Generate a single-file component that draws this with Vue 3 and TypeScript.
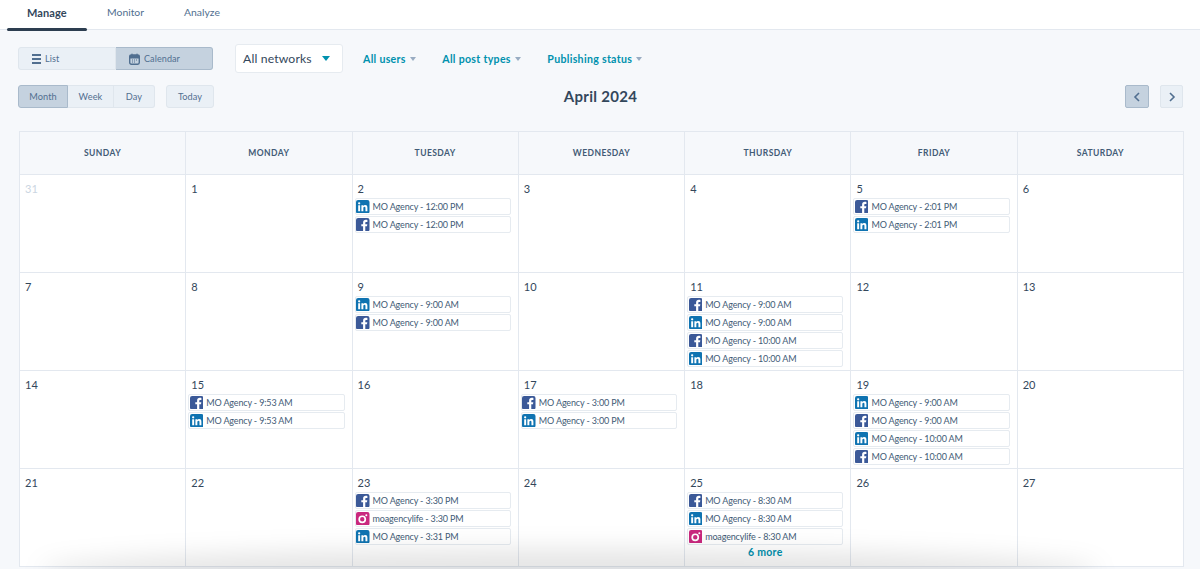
<script setup lang="ts">
type Net = "in" | "fb" | "ig";
interface Post {
  net: Net;
  text: string;
}
interface Day {
  n: number;
  muted?: boolean;
  posts?: Post[];
  more?: string;
}

const mo = (net: Net, time: string): Post => ({ net, text: `MO Agency - ${time}` });
const ig = (time: string): Post => ({ net: "ig", text: `moagencylife - ${time}` });

const weekdays = ["SUNDAY", "MONDAY", "TUESDAY", "WEDNESDAY", "THURSDAY", "FRIDAY", "SATURDAY"];

const days: Day[] = [
  { n: 31, muted: true },
  { n: 1 },
  { n: 2, posts: [mo("in", "12:00 PM"), mo("fb", "12:00 PM")] },
  { n: 3 },
  { n: 4 },
  { n: 5, posts: [mo("fb", "2:01 PM"), mo("in", "2:01 PM")] },
  { n: 6 },
  { n: 7 },
  { n: 8 },
  { n: 9, posts: [mo("in", "9:00 AM"), mo("fb", "9:00 AM")] },
  { n: 10 },
  { n: 11, posts: [mo("fb", "9:00 AM"), mo("in", "9:00 AM"), mo("fb", "10:00 AM"), mo("in", "10:00 AM")] },
  { n: 12 },
  { n: 13 },
  { n: 14 },
  { n: 15, posts: [mo("fb", "9:53 AM"), mo("in", "9:53 AM")] },
  { n: 16 },
  { n: 17, posts: [mo("fb", "3:00 PM"), mo("in", "3:00 PM")] },
  { n: 18 },
  { n: 19, posts: [mo("in", "9:00 AM"), mo("fb", "9:00 AM"), mo("in", "10:00 AM"), mo("fb", "10:00 AM")] },
  { n: 20 },
  { n: 21 },
  { n: 22 },
  { n: 23, posts: [mo("fb", "3:30 PM"), ig("3:30 PM"), mo("in", "3:31 PM")] },
  { n: 24 },
  { n: 25, posts: [mo("fb", "8:30 AM"), mo("in", "8:30 AM"), ig("8:30 AM")], more: "6 more" },
  { n: 26 },
  { n: 27 },
];
</script>

<template>
  <div class="page">
    <nav class="tabs">
      <a class="tab tab--active">Manage</a>
      <a class="tab">Monitor</a>
      <a class="tab">Analyze</a>
    </nav>

    <div class="filters">
      <div class="seg seg--view">
        <button class="seg-btn">
          <svg width="9" height="10" viewBox="0 0 9 10"><path d="M0 1h9M0 5h9M0 9h9" stroke="#516f90" stroke-width="2" fill="none" /></svg>
          List
        </button>
        <button class="seg-btn seg-btn--on">
          <svg width="11" height="12" viewBox="0 0 11 12">
            <rect x="0.7" y="2" width="9.6" height="9.2" rx="1.6" fill="none" stroke="#516f90" stroke-width="1.4" />
            <path d="M1 2.5h9V5H1zM3 .6v2.4M8 .6v2.4" fill="#516f90" stroke="#516f90" />
            <path d="M3 7h1M5 7h1M7 7h1M3 9h1M5 9h1" stroke="#516f90" />
          </svg>
          Calendar
        </button>
      </div>
      <div class="select">
        <span>All networks</span>
        <i class="caret caret--teal"></i>
      </div>
      <a class="filter">All users<i class="caret"></i></a>
      <a class="filter">All post types<i class="caret"></i></a>
      <a class="filter">Publishing status<i class="caret"></i></a>
    </div>

    <div class="range">
      <div class="range-left">
        <div class="seg">
          <button class="seg-btn seg-btn--on seg-month">Month</button>
          <button class="seg-btn seg-week">Week</button>
          <button class="seg-btn seg-day">Day</button>
        </div>
        <button class="today">Today</button>
      </div>
      <h1 class="title">April 2024</h1>
      <div class="range-right">
        <button class="arrow arrow--on">
          <svg width="8" height="12" viewBox="0 0 8 12"><path d="M6 2 2 6l4 4" fill="none" stroke="#516f90" stroke-width="1.6" /></svg>
        </button>
        <button class="arrow">
          <svg width="8" height="12" viewBox="0 0 8 12"><path d="m2 2 4 4-4 4" fill="none" stroke="#516f90" stroke-width="1.6" /></svg>
        </button>
      </div>
    </div>

    <div class="calendar">
      <div v-for="w in weekdays" :key="w" class="head">{{ w }}</div>
      <div v-for="d in days" :key="d.n" class="cell">
        <div class="num" :class="{ 'num--muted': d.muted }">{{ d.n }}</div>
        <div v-for="(p, i) in d.posts" :key="i" class="post">
          <svg v-if="p.net === 'in'" class="ico" viewBox="0 0 16 16">
            <rect width="16" height="16" rx="2.5" fill="#0f73b1" />
            <path d="M2.6 6.2h2.3v7.2H2.6zM3.75 2.6a1.35 1.35 0 1 1 0 2.7 1.35 1.35 0 0 1 0-2.7zM6.4 6.2h2.2v1c.4-.7 1.2-1.2 2.3-1.2 2.2 0 2.6 1.4 2.6 3.3v4.1h-2.3V9.8c0-.9 0-1.8-1.1-1.8s-1.4.9-1.4 1.8v3.6H6.4z" fill="#fff" />
          </svg>
          <svg v-else-if="p.net === 'fb'" class="ico" viewBox="0 0 16 16">
            <rect width="16" height="16" rx="2.5" fill="#3b5998" />
            <path d="M11 16V9.8h2l.4-2.5H11V5.8c0-.8.3-1.2 1.2-1.2h1.3V2.3c-.4 0-1.1-.1-1.9-.1-1.9 0-3.2 1.2-3.2 3.3v1.8H6.3v2.5h2.1V16z" fill="#fff" />
          </svg>
          <svg v-else class="ico" viewBox="0 0 16 16">
            <rect width="16" height="16" rx="2.5" fill="#c9287e" />
            <circle cx="7.4" cy="8.6" r="3.6" fill="none" stroke="#fff" stroke-width="2" />
            <circle cx="12.2" cy="3.8" r="1.2" fill="#fff" />
          </svg>
          <span>{{ p.text }}</span>
        </div>
        <a v-if="d.more" class="more">{{ d.more }}</a>
      </div>
    </div>

    <div class="fade"></div>
  </div>
</template>

<style>
html,
body {
  margin: 0;
  background: #f6f8fb;
}
</style>

<style scoped>
.page {
  position: relative;
  height: 569px;
  overflow: hidden;
  background: #f6f8fb;
  color: #33475b;
  font-family: Lato, "Open Sans", sans-serif;
}

button {
  font-family: inherit;
  cursor: pointer;
}

.tabs {
  display: flex;
  height: 30px;
  box-sizing: border-box;
  background: #fff;
  border-bottom: 1px solid #e3e8ef;
  padding-left: 7px;
}

.tab {
  position: relative;
  padding: 5px 20px 0;
  font-size: 10.4px;
  line-height: 15px;
  color: #516f90;
}

.tab--active {
  width: 80px;
  box-sizing: border-box;
  font-size: 11px;
  font-weight: 700;
  letter-spacing: 0.1px;
  color: #33475b;
}

.tab--active::after {
  content: "";
  position: absolute;
  left: 0;
  right: 0;
  bottom: -2px;
  height: 3px;
  border-radius: 2px;
  background: #2d3e50;
}

.filters {
  display: flex;
  align-items: center;
  height: 29px;
  margin: 14px 0 0 18px;
}

.seg {
  display: flex;
}

.seg--view {
  width: 195px;
  height: 23px;
  margin-right: 22px;
}

.seg--view .seg-btn {
  flex: 1;
  justify-content: flex-start;
  gap: 4px;
  padding-left: 13px;
  font-size: 9px;
  letter-spacing: 0.1px;
}

.seg-btn {
  display: flex;
  align-items: center;
  justify-content: center;
  gap: 5px;
  padding: 0;
  height: 100%;
  font-size: 9.2px;
  letter-spacing: 0.1px;
  color: #516f90;
  background: #eaf0f6;
  border: 1px solid #dfe6ed;
  border-left-width: 0;
}

.seg-btn:first-child {
  border-left-width: 1px;
  border-radius: 3px 0 0 3px;
}

.seg-btn:last-child {
  border-radius: 0 3px 3px 0;
}

.seg-btn--on {
  background: #c5d2df;
  border-color: #a9bacb;
}

.select {
  display: flex;
  align-items: center;
  justify-content: space-between;
  box-sizing: border-box;
  width: 108px;
  height: 29px;
  padding: 0 12px 0 7px;
  margin-right: 20px;
  background: #fff;
  border: 1px solid #e6ebf0;
  border-radius: 3px;
  font-size: 12.2px;
  letter-spacing: 0.15px;
}

.filter {
  display: flex;
  align-items: center;
  gap: 4px;
  margin-right: 26.5px;
  font-size: 10.6px;
  font-weight: 700;
  letter-spacing: 0.3px;
  color: #0091ae;
}

.caret {
  width: 0;
  height: 0;
  border-left: 3.5px solid transparent;
  border-right: 3.5px solid transparent;
  border-top: 4px solid #99acc2;
}

.caret--teal {
  border-left-width: 4.5px;
  border-right-width: 4.5px;
  border-top: 5px solid #0091ae;
}

.range {
  display: grid;
  grid-template-columns: 1fr auto 1fr;
  align-items: center;
  height: 23px;
  margin: 12px 17px 0 18px;
}

.range-left {
  display: flex;
  height: 23px;
  gap: 11px;
}

.seg-month {
  width: 50px;
}

.seg-week {
  width: 46px;
}

.seg-day {
  width: 41px;
}

.today {
  width: 48px;
  height: 23px;
  padding: 0;
  font-size: 9.2px;
  color: #516f90;
  background: #eaf0f6;
  border: 1px solid #dfe6ed;
  border-radius: 3px;
}

.title {
  margin: 0;
  padding-bottom: 2px;
  font-size: 15px;
  font-weight: 700;
  letter-spacing: 0.3px;
}

.range-right {
  display: flex;
  justify-content: flex-end;
  gap: 11px;
}

.arrow {
  display: flex;
  align-items: center;
  justify-content: center;
  width: 23px;
  height: 23px;
  padding: 0;
  background: #eaf0f6;
  border: 1px solid #dfe6ed;
  border-radius: 2px;
}

.arrow--on {
  width: 24px;
  background: #c5d2df;
  border-color: #a9bacb;
}

.calendar {
  display: grid;
  grid-template-columns: repeat(7, 1fr);
  grid-template-rows: 43px repeat(4, 98px);
  width: 1164px;
  margin: 23px 0 0 19px;
  border-top: 1px solid #e3e8ef;
  border-left: 1px solid #e3e8ef;
}

.head,
.cell {
  min-width: 0;
  box-sizing: border-box;
  border-right: 1px solid #e3e8ef;
  border-bottom: 1px solid #e3e8ef;
}

.head {
  display: flex;
  align-items: center;
  justify-content: center;
  font-size: 8.5px;
  font-weight: 700;
  letter-spacing: 0.45px;
  color: #425b76;
}

.cell {
  padding: 7px 7px 0 2px;
  background: #fff;
}

.num {
  height: 16px;
  padding-left: 3px;
  font-size: 11px;
  line-height: 14px;
}

.num--muted {
  color: #cbd6e2;
}

.post {
  display: flex;
  align-items: center;
  gap: 3px;
  box-sizing: border-box;
  height: 17px;
  margin-bottom: 1px;
  padding-left: 0.5px;
  background: #fff;
  border: 1px solid #e6ebf0;
  border-radius: 2px;
  font-size: 9px;
  letter-spacing: -0.15px;
  white-space: nowrap;
  color: #425b76;
}

.ico {
  flex: none;
  width: 13.5px;
  height: 13.5px;
}

.more {
  display: block;
  text-align: center;
  font-size: 10.5px;
  font-weight: 700;
  letter-spacing: 0.3px;
  color: #0091ae;
}

.fade {
  position: absolute;
  left: 40px;
  right: 100px;
  bottom: -24px;
  height: 44px;
  border-radius: 50%;
  background: rgba(0, 0, 0, 0.1);
  filter: blur(12px);
  pointer-events: none;
}
</style>
